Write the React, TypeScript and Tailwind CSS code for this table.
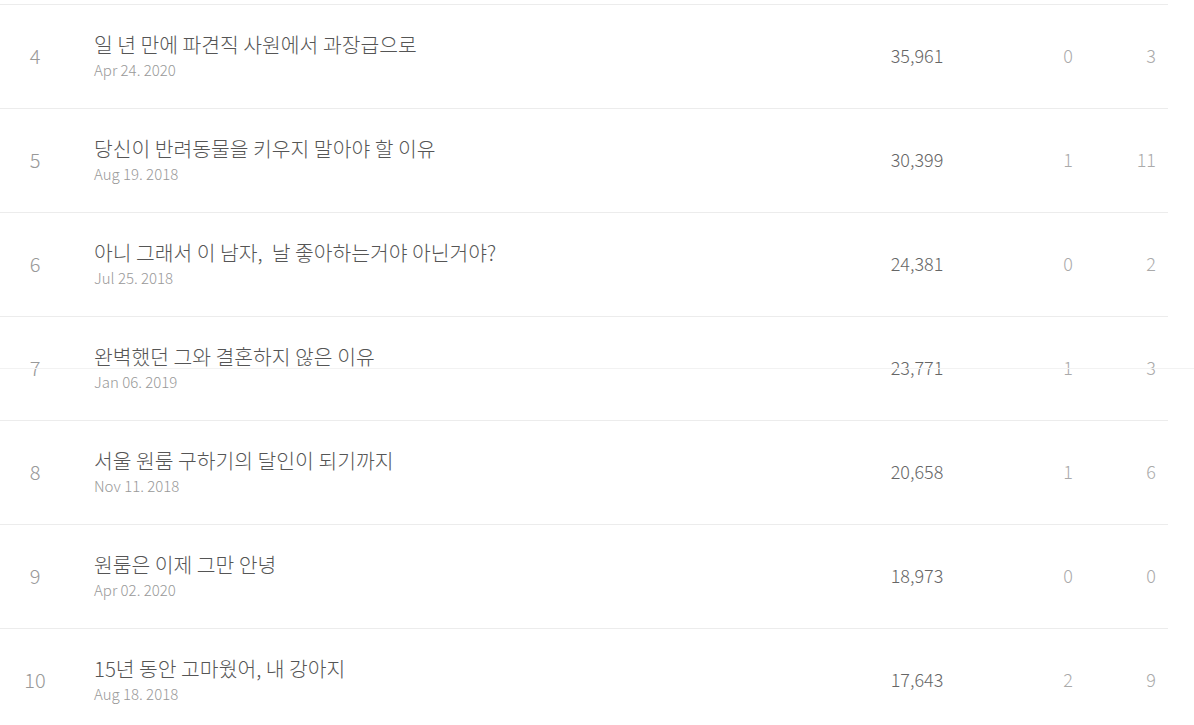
import React from 'react';

const rows = [
  { rank: 4, title: '일 년 만에 파견직 사원에서 과장급으로', date: 'Apr 24. 2020', views: '35,961', likes: 0, comments: 3 },
  { rank: 5, title: '당신이 반려동물을 키우지 말아야 할 이유', date: 'Aug 19. 2018', views: '30,399', likes: 1, comments: 11 },
  { rank: 6, title: '아니 그래서 이 남자,  날 좋아하는거야 아닌거야?', date: 'Jul 25. 2018', views: '24,381', likes: 0, comments: 2 },
  { rank: 7, title: '완벽했던 그와 결혼하지 않은 이유', date: 'Jan 06. 2019', views: '23,771', likes: 1, comments: 3 },
  { rank: 8, title: '서울 원룸 구하기의 달인이 되기까지', date: 'Nov 11. 2018', views: '20,658', likes: 1, comments: 6 },
  { rank: 9, title: '원룸은 이제 그만 안녕', date: 'Apr 02. 2020', views: '18,973', likes: 0, comments: 0 },
  { rank: 10, title: '15년 동안 고마웠어, 내 강아지', date: 'Aug 18. 2018', views: '17,643', likes: 2, comments: 9 },
];

const App = () => {
  return (
    <div
      className="relative w-[1194px] h-[725px] overflow-hidden bg-white font-light"
      style={{ fontFamily: '"Noto Sans CJK KR", "Noto Sans", sans-serif' }}
    >
      <div className="w-[1168px]">
        {/* leftover of the previous row */}
        <div className="h-[4px]" />

        {rows.map((row) => (
          <div
            key={row.rank}
            className="flex items-center h-[104px] pb-[1px] border-t border-[#ececec]"
          >
            <div className="w-[70px] mb-[1px] text-center text-[20px] text-[#999]">{row.rank}</div>
            <div className="flex-1 pl-[24px]">
              <div className="text-[20.4px] leading-[28px] text-[#555] whitespace-pre">{row.title}</div>
              <div className="text-[15px] leading-[24px] text-[#999]">{row.date}</div>
            </div>
            <div className="w-[120px] mb-[2px] text-center text-[18px] text-[#666]">{row.views}</div>
            <div className="w-[100px] ml-[41px] mb-[2px] text-center text-[18px] text-[#aaa]">{row.likes}</div>
            <div className="w-[50px] pr-[12px] mb-[2px] text-right text-[18px] text-[#aaa]">{row.comments}</div>
          </div>
        ))}
      </div>

      {/* faint seam line over the page */}
      <div className="absolute left-0 right-0 top-[368px] h-px bg-[#f2f2f2]" />
    </div>
  );
};

export default App;
